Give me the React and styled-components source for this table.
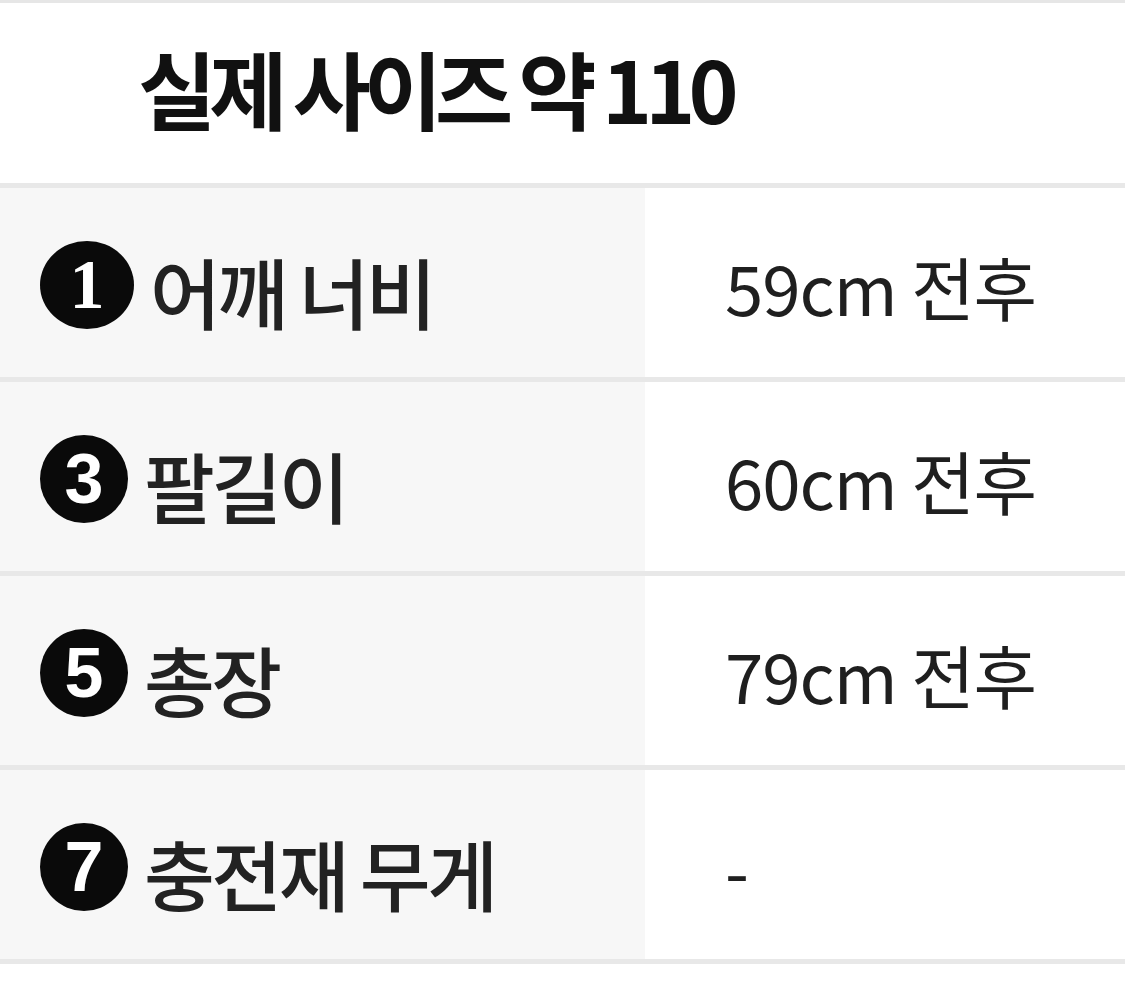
import React from 'react';
import styled, { createGlobalStyle } from 'styled-components';

const GlobalStyle = createGlobalStyle`
  html, body {
    margin: 0;
    padding: 0;
    background: #ffffff;
  }
  body {
    font-family: "Noto Sans CJK KR", "Noto Sans", sans-serif;
    color: #1f1f1f;
  }
`;

const Page = styled.div`
  width: 1125px;
  height: 991px;
  overflow: hidden;
  background: #fff;
  border-top: 3px solid #e6e6e6;
  box-sizing: border-box;
`;

const Title = styled.h1`
  margin: 0;
  height: 180px;
  display: flex;
  align-items: center;
  padding-left: 138px;
  padding-bottom: 14px;
  box-sizing: border-box;
  font-size: 85px;
  font-weight: 700;
  letter-spacing: -7px;
  color: #111;
`;

const Table = styled.div`
  display: flex;
  flex-direction: column;
`;

const Row = styled.div`
  display: grid;
  grid-template-columns: 645px 1fr;
  height: 194px;
  border-top: 5px solid #e8e8e8;
  box-sizing: border-box;
  &:last-child {
    border-bottom: 5px solid #e8e8e8;
    height: 199px;
  }
`;

const LabelCell = styled.div`
  background: #f7f7f7;
  display: flex;
  align-items: center;
  padding-left: 40px;
  padding-top: 16px;
  gap: 16px;
`;

const Badge = styled.span`
  width: ${(p) => (p.$wide ? 94 : 88)}px;
  height: 88px;
  border-radius: 50%;
  background: #0a0a0a;
  color: #fff;
  display: inline-flex;
  align-items: center;
  justify-content: center;
  font-family: ${(p) => (p.$serif ? '"Liberation Serif", serif' : '"Liberation Sans", sans-serif')};
  font-weight: 700;
  font-size: 70px;
  line-height: 1;
  margin-top: -12px;
`;

const Label = styled.span`
  font-size: 77px;
  font-weight: 500;
  letter-spacing: -3.5px;
  color: #222;
`;

const ValueCell = styled.div`
  display: flex;
  align-items: center;
  padding-left: 80px;
  padding-top: 6px;
  font-size: 69px;
  font-weight: 400;
  letter-spacing: -1px;
  color: #1f1f1f;
`;

const rows = [
  { n: '1', label: '어깨 너비', value: '59cm 전후', serif: true, wide: true },
  { n: '3', label: '팔길이', value: '60cm 전후' },
  { n: '5', label: '총장', value: '79cm 전후' },
  { n: '7', label: '충전재 무게', value: '-' },
];

export default function App() {
  return (
    <>
      <GlobalStyle />
      <Page>
        <Title>실제 사이즈 약 110</Title>
        <Table>
          {rows.map((r) => (
            <Row key={r.n}>
              <LabelCell>
                <Badge $serif={r.serif} $wide={r.wide}>{r.n}</Badge>
                <Label>{r.label}</Label>
              </LabelCell>
              <ValueCell>{r.value}</ValueCell>
            </Row>
          ))}
        </Table>
      </Page>
    </>
  );
}
